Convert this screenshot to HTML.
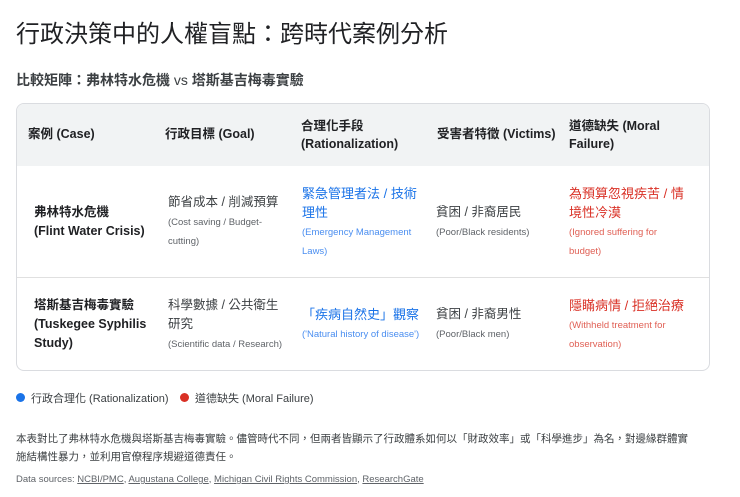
<!DOCTYPE html>
<html><head><meta charset="utf-8"><style>
*{margin:0;padding:0;box-sizing:border-box}
body{width:740px;height:497px;background:#fff;font-family:"Liberation Sans","Noto Sans CJK TC",sans-serif;color:#202124;position:relative;overflow:hidden}
.a{position:absolute;white-space:nowrap}
h1{position:absolute;left:16px;top:14px;font-size:24px;font-weight:400;color:#202124}
.sub{left:16px;top:70px;font-size:14px;font-weight:700;color:#3c4043}
.box{position:absolute;left:16px;top:103px;width:694px;height:268px;border:1px solid #dadce0;border-radius:8px;overflow:hidden}
.hd{position:absolute;left:0;top:0;width:100%;height:62px;background:#f1f3f4}
.ln{position:absolute;left:0;top:173px;width:100%;height:1px;background:#e0e0e0}
.h{font-size:12.5px;font-weight:700;line-height:18px;color:#202124}
.b{font-size:12.5px;font-weight:700;line-height:19px}
.m{font-size:12.5px;line-height:19px;color:#3c4043}
.s{font-size:9.5px;line-height:19px;color:#5f6368}
.bl{color:#1a73e8}.rd{color:#d93025}
.bls{color:#4a8ef0}.rds{color:#e06055}
.dot{width:9px;height:9px;border-radius:50%;top:393px}
.ft{font-size:10.5px;color:#3c4043}
u{color:#5f6368}
</style></head><body>
<h1>行政決策中的人權盲點：跨時代案例分析</h1>
<div class="a sub">比較矩陣：弗林特水危機 <span style="font-weight:400">vs</span> 塔斯基吉梅毒實驗</div>
<div class="box"><div class="hd"></div><div class="ln"></div></div>
<div class="a h" style="left:28px;top:125px">案例 (Case)</div>
<div class="a h" style="left:165px;top:125px">行政目標 (Goal)</div>
<div class="a h" style="left:301px;top:117px">合理化手段<br>(Rationalization)</div>
<div class="a h" style="left:437px;top:125px">受害者特徵 (Victims)</div>
<div class="a h" style="left:569px;top:117px">道德缺失 (Moral<br>Failure)</div>

<div class="a b" style="left:34px;top:203px">弗林特水危機<br>(Flint Water Crisis)</div>
<div class="a m" style="left:168px;top:193px">節省成本 / 削減預算</div>
<div class="a s" style="left:168px;top:213px">(Cost saving / Budget-<br>cutting)</div>
<div class="a m bl" style="left:302px;top:184px;font-size:13px">緊急管理者法 / 技術<br>理性</div>
<div class="a s bls" style="left:302px;top:223px">(Emergency Management<br>Laws)</div>
<div class="a m" style="left:436px;top:203px">貧困 / 非裔居民</div>
<div class="a s" style="left:436px;top:223px">(Poor/Black residents)</div>
<div class="a m rd" style="left:569px;top:184px;font-size:13px">為預算忽視疾苦 / 情<br>境性冷漠</div>
<div class="a s rds" style="left:569px;top:223px">(Ignored suffering for<br>budget)</div>

<div class="a b" style="left:34px;top:296px">塔斯基吉梅毒實驗<br>(Tuskegee Syphilis<br>Study)</div>
<div class="a m" style="left:168px;top:296px">科學數據 / 公共衛生<br>研究</div>
<div class="a s" style="left:168px;top:335px">(Scientific data / Research)</div>
<div class="a m bl" style="left:302px;top:305px;font-size:13px">「疾病自然史」觀察</div>
<div class="a s bls" style="left:302px;top:325px">('Natural history of disease')</div>
<div class="a m" style="left:436px;top:305px">貧困 / 非裔男性</div>
<div class="a s" style="left:436px;top:325px">(Poor/Black men)</div>
<div class="a m rd" style="left:569px;top:296px;font-size:13px">隱瞞病情 / 拒絕治療</div>
<div class="a s rds" style="left:569px;top:316px">(Withheld treatment for<br>observation)</div>

<div class="a dot" style="left:16px;background:#1a73e8"></div>
<div class="a ft" style="left:31px;top:390px;font-size:11px">行政合理化 (Rationalization)</div>
<div class="a dot" style="left:180px;background:#d93025"></div>
<div class="a ft" style="left:195px;top:390px;font-size:11px">道德缺失 (Moral Failure)</div>
<div class="a ft" style="left:16px;top:430px;line-height:18px">本表對比了弗林特水危機與塔斯基吉梅毒實驗。儘管時代不同，但兩者皆顯示了行政體系如何以「財政效率」或「科學進步」為名，對邊緣群體實<br>施結構性暴力，並利用官僚程序規避道德責任。</div>
<div class="a" style="left:16px;top:474px;font-size:9.5px;color:#5f6368">Data sources: <u>NCBI/PMC</u>, <u>Augustana College</u>, <u>Michigan Civil Rights Commission</u>, <u>ResearchGate</u></div>
</body></html>
